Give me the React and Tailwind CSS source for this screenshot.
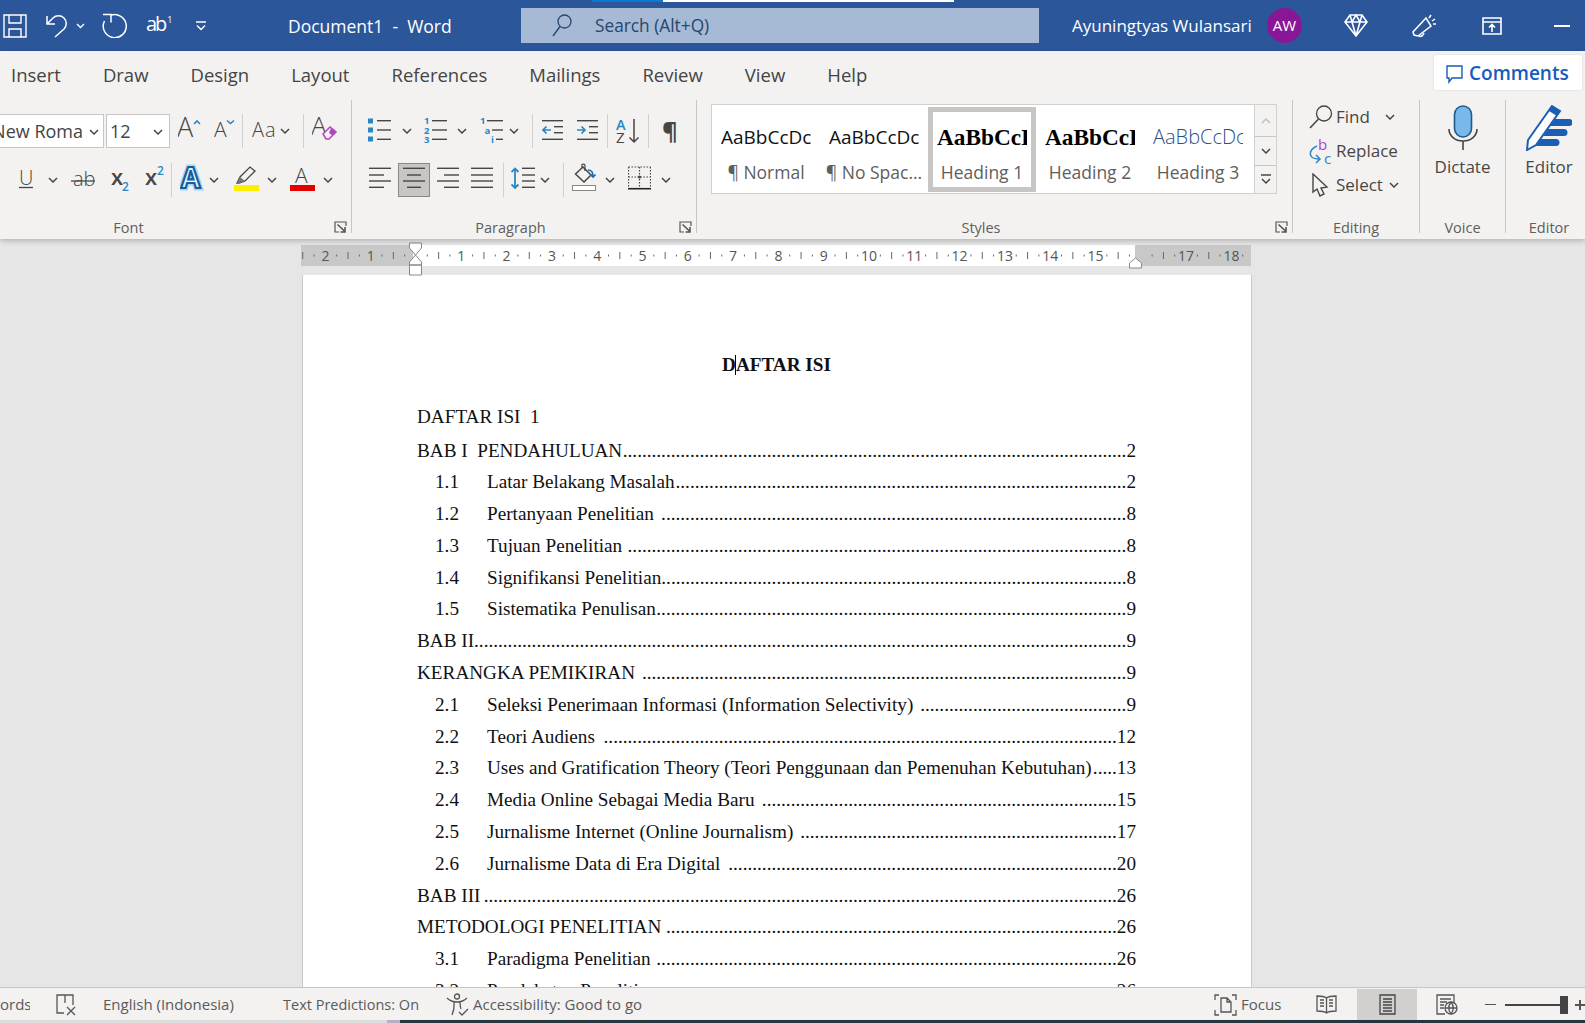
const sans = "font-['Open_Sans',sans-serif]";
const GRAY = '#484644';
const BLUE = '#2a86c4';

function Ic({ w, h = 34, className = '', children }) {
  return (
    <svg width={w} height={h} viewBox={`0 0 ${w} ${h}`} fill="none" stroke={GRAY} strokeWidth="1.3" className={`shrink-0 ${className}`}>
      {children}
    </svg>
  );
}

function T({ x, y, s, w = 400, c = GRAY, children, ...rest }) {
  return (
    <text x={x} y={y} fontSize={s} fontWeight={w} fill={c} stroke="none" fontFamily="'Open Sans',sans-serif" {...rest}>
      {children}
    </text>
  );
}

function Chev({ className = '' }) {
  return (
    <svg width="10" height="6" viewBox="0 0 10 6" fill="none" stroke={GRAY} strokeWidth="1.5" className={`shrink-0 ${className}`}>
      <path d="M1 1l4 4 4-4" />
    </svg>
  );
}

function Sep({ className = '' }) {
  return <div className={`h-[34px] w-px shrink-0 bg-[#d2d0ce] ${className}`} />;
}

function Launcher() {
  return (
    <svg width="13" height="12" viewBox="0 0 13 12" fill="none" stroke="#555" strokeWidth="1.2" className="absolute bottom-0 right-[4px]">
      <path d="M12 5V1H1v10h4" />
      <path d="M3.5 3.5L11 10.5M11 6v5H6.5" strokeWidth="1.6" />
    </svg>
  );
}

function Group({ width, label, labelPad = '', launcher, children }) {
  return (
    <div className={`relative flex h-[133px] shrink-0 flex-col border-r border-[#c8c6c4] ${width}`}>
      <div className="flex-1">{children}</div>
      <div className={`h-[10px] text-center text-[14.5px] leading-[10px] text-[#605e5c] ${labelPad}`}>{label}</div>
      {launcher && <Launcher />}
    </div>
  );
}

function Lines({ rows, x = 0, color = GRAY }) {
  return rows.map(([a, b, y]) => <path key={y + '' + a} d={`M${a + x} ${y}H${b + x}`} stroke={color} strokeWidth="1.4" />);
}

function TitleBar() {
  return (
    <div className="relative flex h-[51px] shrink-0 items-center bg-[#2b579a] text-white">
      <div className="absolute left-[592px] top-0 h-[2px] w-[71px] bg-[#0a7ad1]" />
      <div className="absolute left-[663px] top-0 h-[2px] w-[291px] bg-white" />
      <svg width="24" height="24" viewBox="0 0 24 24" fill="none" stroke="#fff" strokeWidth="1.4" className="ml-[3px] shrink-0">
        <path d="M1 1h22v22H1zM6 1v8h12V1M6 23v-8h12v8" />
      </svg>
      <svg width="23" height="25" viewBox="0 0 23 25" fill="none" stroke="#fff" strokeWidth="1.5" className="ml-[19px] shrink-0">
        <path d="M1 3v8h8M1 11l6-6c3-3 8-3 11 0s3 8 0 11l-9 8" />
      </svg>
      <svg width="9" height="6" viewBox="0 0 9 6" fill="none" stroke="#fff" strokeWidth="1.4" className="ml-[7px] shrink-0">
        <path d="M1 1l3.5 3.5L8 1" />
      </svg>
      <svg width="25" height="25" viewBox="0 0 25 25" fill="none" stroke="#fff" strokeWidth="1.5" className="ml-[17px] shrink-0">
        <path d="M8.5 2.5A11.5 11.5 0 1 1 2.5 8M1 1.500h8v8" />
      </svg>
      <span className="ml-[19px] w-[28px] shrink-0 whitespace-nowrap text-[20px] leading-[24px] tracking-[-2px]">
        ab<span className="relative top-[-8px] ml-[2px] text-[9px]">1</span>
      </span>
      <svg width="12" height="10" viewBox="0 0 12 10" fill="none" stroke="#fff" strokeWidth="1.4" className="ml-[21px] shrink-0">
        <path d="M1 1h10M2 4.5l4 4 4-4" />
      </svg>
      <span className="ml-[81px] w-[233px] shrink-0 whitespace-pre pt-[2px] text-[17.5px]">Document1  -  Word</span>
      <div className="flex h-[35px] w-[518px] shrink-0 items-center bg-[#a6b9d5] text-[#26466f]">
        <svg width="20" height="23" viewBox="0 0 20 23" fill="none" stroke="#26466f" strokeWidth="1.3" className="ml-[31px] shrink-0">
          <circle cx="12.5" cy="7.5" r="6.5" />
          <path d="M8 12.5L1 22" />
        </svg>
        <span className="ml-[23px] text-[17.3px]">Search (Alt+Q)</span>
      </div>
      <span className="ml-[33px] w-[195px] shrink-0 whitespace-nowrap text-[17px]">Ayuningtyas Wulansari</span>
      <div className="flex h-[35px] w-[35px] shrink-0 items-center justify-center rounded-full bg-[#881798] text-[15px]">AW</div>
      <svg width="24" height="23" viewBox="0 0 24 23" fill="none" stroke="#fff" strokeWidth="1.6" className="ml-[42px] shrink-0">
        <path d="M6 1h12l5 7-11 14L1 8zM1 8h22M8 8l4 14 4-14M6 1l2 7 4-7 4 7 2-7" />
      </svg>
      <svg width="25" height="25" viewBox="0 0 25 25" fill="none" stroke="#fff" strokeWidth="1.5" className="ml-[44px] shrink-0">
        <path d="M14 5l5 8L6 23l-4-1-1-3zM7 23c2 1 4 0 5-3M17 5l2-3M20 8l3-2M21 11h3" />
      </svg>
      <svg width="20" height="18" viewBox="0 0 20 18" fill="none" stroke="#fff" strokeWidth="1.6" className="ml-[45px] shrink-0">
        <path d="M1 1h18v16H1zM1 5h18M10 15V8M7 10.5L10 7.5l3 3" />
      </svg>
      <div className="ml-[52px] h-[2px] w-[16px] shrink-0 bg-white" />
    </div>
  );
}

function TabBar() {
  const tabs = ['Insert', 'Draw', 'Design', 'Layout', 'References', 'Mailings', 'Review', 'View', 'Help'];
  return (
    <div className="flex h-[49px] items-center justify-between pb-[2px] pl-[11px] pr-[3px] text-[18.5px] text-[#444]">
      <div className="flex gap-[42px]">
        {tabs.map((t) => (
          <span key={t}>{t}</span>
        ))}
      </div>
      <div className="mb-[5px] flex h-[35px] w-[148px] items-center rounded-[2px] bg-white pl-[12px] pt-[3px] shadow-[0_0_2px_#d0d0d0]">
        <svg width="17" height="20" viewBox="0 0 17 20" fill="none" stroke="#185abd" strokeWidth="1.4" className="shrink-0">
          <path d="M1 2h15v12H6l-3 4v-4H1z" />
        </svg>
        <span className="ml-[6px] text-[19px] font-semibold text-[#185abd]">Comments</span>
      </div>
    </div>
  );
}

function FontGroup() {
  return (
    <Group width="w-[352px]" label="Font" labelPad="pr-[94px]" launcher>
      <div className="mt-[14px] flex h-[34px] items-center">
        <div className="flex h-[34px] w-[104px] shrink-0 items-center justify-end overflow-hidden whitespace-nowrap border border-l-0 border-[#c8c6c4] bg-white pr-[4px] pt-[1px] text-[18px] text-[#444]">
          <span>New Roma</span>
          <Chev className="ml-[6px]" />
        </div>
        <div className="ml-[2px] flex h-[34px] w-[64px] shrink-0 items-center justify-between border border-[#c8c6c4] bg-white pl-[3px] pr-[6px] pt-[1px] text-[18px] text-[#444]">
          <span>12</span>
          <Chev />
        </div>
        <Ic w={23} className="ml-[8px]">
          <T x="-1" y="23" s="27" w={300}>A</T>
          <path d="M16 10l3-3 3 3" stroke={BLUE} strokeWidth="1.6" />
        </Ic>
        <Ic w={21} className="ml-[13px]">
          <T x="0" y="23" s="21" w={300}>A</T>
          <path d="M13 6.5l3.5 3 3.5-3" stroke={BLUE} strokeWidth="1.6" />
        </Ic>
        <Sep className="ml-[7px]" />
        <Ic w={38} className="ml-[9px]">
          <T x="0" y="23" s="20" w={300} letterSpacing="1">Aa</T>
          <path d="M29 15l4 4 4-4" strokeWidth="1.5" />
        </Ic>
        <Sep className="ml-[13px]" />
        <Ic w={25} className="ml-[8px]">
          <T x="-1" y="21" s="26" w={300}>A</T>
          <path d="M11 20l7-7 6 5-7 7h-3z" stroke="#b146c2" strokeWidth="1.5" fill="#f3f2f1" />
          <path d="M17 19l3.500 2.500 3.500-3.500-5-4z" fill="#b146c2" stroke="none" />
        </Ic>
      </div>
      <div className="mt-[15px] flex h-[34px] items-center">
        <Ic w={14} className="ml-[19px]">
          <T x="0" y="22" s="20" w={300}>U</T>
          <path d="M0 24.5h14" />
        </Ic>
        <Chev className="ml-[15px]" />
        <Ic w={24} className="ml-[13px]">
          <T x="2" y="23" s="20" w={300}>ab</T>
          <path d="M0 18h24" />
        </Ic>
        <Ic w={18} className="ml-[16px]">
          <T x="0" y="22" s="22" w={600}>x</T>
          <T x="11" y="28" s="12" w={600} c={BLUE}>2</T>
        </Ic>
        <Ic w={19} className="ml-[16px]">
          <T x="0" y="22" s="22" w={600}>x</T>
          <T x="12" y="12" s="12" w={600} c={BLUE}>2</T>
        </Ic>
        <Sep className="ml-[7px]" />
        <Ic w={25} className="ml-[8px]">
          <T x="1" y="25" s="28" w={700} c="#a9d6f2" stroke="#a9d6f2" strokeWidth="5">A</T>
          <T x="1" y="25" s="28" w={700} c="#e8f3fb" stroke="#145f9e" strokeWidth="2.2">A</T>
        </Ic>
        <Chev className="ml-[4px]" />
        <Ic w={25} className="ml-[15px]">
          <path d="M3 20l3-6L16 4l5 4-10 10-6 2z" fill="#f3f2f1" />
          <path d="M3 20l3-6 5 4-6 2z" fill="#777" stroke="none" />
          <rect x="0" y="22" width="25" height="6" fill="#ffee00" stroke="none" />
        </Ic>
        <Chev className="ml-[8px]" />
        <Ic w={25} className="ml-[13px]">
          <T x="5" y="20" s="21" w={300}>A</T>
          <rect x="0" y="22" width="25" height="6" fill="#e60000" stroke="none" />
        </Ic>
        <Chev className="ml-[8px]" />
      </div>
    </Group>
  );
}

function ParagraphGroup() {
  return (
    <Group width="w-[345px]" label="Paragraph" labelPad="pr-[27px]" launcher>
      <div className="mt-[14px] flex h-[34px] items-center">
        <Ic w={24} className="ml-[15px]">
          <rect x="1" y="4.5" width="5" height="5" fill={BLUE} stroke="none" />
          <rect x="1" y="13.5" width="5" height="5" fill={BLUE} stroke="none" />
          <rect x="1" y="22.5" width="5" height="5" fill={BLUE} stroke="none" />
          <Lines rows={[[10, 24, 6.7], [10, 24, 16], [10, 24, 25.3]]} />
        </Ic>
        <Chev className="ml-[11px]" />
        <Ic w={23} className="ml-[12px]">
          <T x="0" y="10" s="9.5" w={700} c={BLUE}>1</T>
          <T x="0" y="19.5" s="9.5" w={700} c={BLUE}>2</T>
          <T x="0" y="29" s="9.5" w={700} c={BLUE}>3</T>
          <Lines rows={[[8, 23, 6.7], [8, 23, 16], [8, 23, 25.3]]} />
        </Ic>
        <Chev className="ml-[10px]" />
        <Ic w={23} className="ml-[13px]">
          <T x="0" y="10" s="9.5" w={700} c={BLUE}>1</T>
          <T x="4.5" y="19.5" s="9.5" w={700} c={BLUE}>a</T>
          <T x="11" y="29" s="9.5" w={700} c={BLUE}>i</T>
          <Lines rows={[[7, 23, 6.7], [12, 23, 16], [16, 23, 25.3]]} />
        </Ic>
        <Chev className="ml-[6px]" />
        <Sep className="ml-[13px]" />
        <Ic w={21} className="ml-[9px]">
          <Lines rows={[[0, 21, 6.7], [12, 21, 12.7], [12, 21, 18.7], [0, 21, 25.3]]} />
          <path d="M9 16H1M4.5 12.5L1 16l3.5 3.5" stroke={BLUE} strokeWidth="1.7" />
        </Ic>
        <Ic w={21} className="ml-[14px]">
          <Lines rows={[[0, 21, 6.7], [12, 21, 12.7], [12, 21, 18.7], [0, 21, 25.3]]} />
          <path d="M0 16h8M4.5 12.5L8 16l-3.5 3.5" stroke={BLUE} strokeWidth="1.7" />
        </Ic>
        <Sep className="ml-[9px]" />
        <Ic w={24} className="ml-[8px]">
          <T x="0" y="15.5" s="14.5" w={600} c={BLUE}>A</T>
          <T x="0" y="29" s="15" w={500}>Z</T>
          <path d="M18 5v23M13.5 23.5L18 28l4.5-4.5" strokeWidth="1.5" />
        </Ic>
        <Sep className="ml-[8px]" />
        <Ic w={15} className="ml-[13px]">
          <T x="0" y="26" s="24" w={700}>¶</T>
        </Ic>
      </div>
      <div className="mt-[15px] flex h-[34px] items-center">
        <Ic w={22} className="ml-[17px]">
          <Lines rows={[[0, 22, 5.3], [0, 15, 12], [0, 22, 18], [0, 15, 24.3]]} />
        </Ic>
        <div className="ml-[7px] h-[34px] w-[32px] shrink-0 border border-[#8a8886] bg-[#c8c6c4]">
          <Ic w={30} h={32}>
            <Lines rows={[[4, 26, 4.3], [8, 22, 11], [4, 26, 17], [8, 22, 23.3]]} />
          </Ic>
        </div>
        <Ic w={22} className="ml-[7px]">
          <Lines rows={[[0, 22, 5.3], [7, 22, 12], [0, 22, 18], [7, 22, 24.3]]} />
        </Ic>
        <Ic w={22} className="ml-[12px]">
          <Lines rows={[[0, 22, 5.3], [0, 22, 12], [0, 22, 18], [0, 22, 24.3]]} />
        </Ic>
        <Sep className="ml-[10px]" />
        <Ic w={24} className="ml-[7px]">
          <Lines rows={[[11, 24, 5.3], [11, 24, 12], [11, 24, 18], [11, 24, 24.3]]} />
          <path d="M4 6v19M.5 9L4 5.5 7.5 9M.5 21.5L4 25l3.5-3.5" stroke={BLUE} strokeWidth="1.8" />
        </Ic>
        <Chev className="ml-[5px]" />
        <Sep className="ml-[13px]" />
        <Ic w={24} className="ml-[8px]">
          <path d="M3.5 11L11 4l8 8-7 7z" strokeWidth="1.5" fill="#f3f2f1" />
          <path d="M10 5V1.5c2-1 3 0 3 1.5v5" strokeWidth="1.2" />
          <path d="M16 7c3 0 5 2 5 6M18.500 11.500L21 14l2.500-2.500" stroke="#1a6eb5" strokeWidth="1.6" />
          <rect x="0.5" y="22.500" width="23" height="5" stroke="#8a8886" fill="#fff" strokeWidth="1" />
        </Ic>
        <Chev className="ml-[9px]" />
        <Ic w={23} className="ml-[13px]">
          <path d="M.5 4h22M.5 4v20M22.500 4v20M11.500 4v20M.5 14h22" strokeDasharray="1.5 1.5" strokeWidth="1.2" />
          <path d="M0 25.700h23" stroke="#222" strokeWidth="1.6" />
          <circle cx="11.500" cy="14" r="1.600" fill={GRAY} stroke="none" />
        </Ic>
        <Chev className="ml-[10px]" />
      </div>
    </Group>
  );
}

function StyleCell({ preview, label, heading, color, selected }) {
  return (
    <div className={`flex h-[85px] w-[108px] shrink-0 flex-col items-center border-[5px] ${selected ? 'border-[#c8c6c4]' : 'border-transparent'}`}>
      <div
        className={`mt-[11px] h-[28px] w-[90px] overflow-hidden whitespace-nowrap leading-[28px] ${
          heading ? "font-['Liberation_Serif',serif] text-[23.3px] font-bold text-black" : color || 'text-[19px] text-[#111]'
        }`}
      >
        {preview}
      </div>
      <div className="mt-[9px] whitespace-nowrap text-[17.5px] leading-[24px] text-[#605e5c]">{label}</div>
    </div>
  );
}

function StylesGroup() {
  return (
    <Group width="w-[596px]" label="Styles" labelPad="pr-[27px]" launcher>
      <div className="ml-[14px] mt-[4px] flex h-[90px] w-[566px] border border-[#d2d0ce] bg-white">
        <div className="flex w-[542px] items-center">
          <StyleCell preview="AaBbCcDc" label="¶ Normal" />
          <StyleCell preview="AaBbCcDc" label="¶ No Spac..." />
          <StyleCell preview="AaBbCcDd" label="Heading 1" heading selected />
          <StyleCell preview="AaBbCcDd" label="Heading 2" heading />
          <StyleCell preview="AaBbCcDc" label="Heading 3" color="text-[20px] font-light text-[#2f4f7f]" />
        </div>
        <div className="flex w-[22px] flex-col border-l border-[#d2d0ce] bg-[#f3f2f1]">
          <div className="flex h-[32px] items-center justify-center border-b border-[#c8c6c4]">
            <svg width="10" height="6" viewBox="0 0 10 6" fill="none" stroke="#c0c0c0" strokeWidth="1.500"><path d="M1 5l4-4 4 4" /></svg>
          </div>
          <div className="flex h-[29px] items-center justify-center border-b border-[#c8c6c4]">
            <Chev />
          </div>
          <div className="flex flex-1 items-center justify-center">
            <svg width="12" height="11" viewBox="0 0 12 11" fill="none" stroke={GRAY} strokeWidth="1.500"><path d="M1 1h10M2 5l4 4 4-4" /></svg>
          </div>
        </div>
      </div>
    </Group>
  );
}

function EditingGroup() {
  const row = 'flex h-[34px] items-center text-[17px] text-[#484644]';
  return (
    <Group width="w-[127px]" label="Editing">
      <div className="ml-[16px] flex flex-col">
        <div className={row}>
          <svg width="24" height="24" viewBox="0 0 24 24" fill="none" stroke={GRAY} strokeWidth="1.300" className="shrink-0">
            <circle cx="15" cy="8.500" r="7.500" />
            <path d="M9.500 14L1 23" strokeWidth="1.600" />
          </svg>
          <span className="ml-[3px]">Find</span>
          <Chev className="ml-[15px]" />
        </div>
        <div className={row}>
          <svg width="24" height="28" viewBox="0 0 24 28" fill="none" stroke={BLUE} strokeWidth="1.500" className="shrink-0">
            <text x="9" y="13" fontSize="15" fill="#b146c2" stroke="none" fontFamily="'Open Sans',sans-serif">b</text>
            <text x="15" y="27" fontSize="15" fill={BLUE} stroke="none" fontFamily="'Open Sans',sans-serif">c</text>
            <path d="M8 9C3 11 0 15 2 19c1 2 4 3 9 3M7 18l4 4-4 4" />
          </svg>
          <span className="ml-[3px]">Replace</span>
        </div>
        <div className={row}>
          <svg width="24" height="24" viewBox="0 0 24 24" fill="none" stroke={GRAY} strokeWidth="1.400" className="shrink-0">
            <path d="M4 1v18l4-3 3 7 4-2-3-6 6-1z" />
          </svg>
          <span className="ml-[3px]">Select</span>
          <Chev className="ml-[6px]" />
        </div>
      </div>
    </Group>
  );
}

function Ribbon() {
  return (
    <div className={`relative z-10 h-[188px] shrink-0 bg-[#f3f2f1] shadow-[0_2px_5px_rgba(0,0,0,0.22)] ${sans}`}>
      <TabBar />
      <div className="flex">
        <FontGroup />
        <ParagraphGroup />
        <StylesGroup />
        <EditingGroup />
        <Group width="w-[86px]" label="Voice">
          <div className="flex flex-col items-center pt-[5px]">
            <svg width="30" height="46" viewBox="0 0 30 46" fill="none" stroke="#1d5c91" strokeWidth="1.600" className="shrink-0">
              <rect x="6.500" y="1" width="17" height="31" rx="8.500" fill="#7ab8ea" />
              <path d="M1 24c0 7 6 12 14 12s14-5 14-12M15 36v9" stroke="#444" />
            </svg>
            <span className="mt-[4px] text-[17px] leading-[24px] text-[#484644]">Dictate</span>
          </div>
        </Group>
        <div className="w-[80px] shrink-0 pl-[6px]">
          <div className="flex h-[133px] flex-col">
            <div className="flex flex-1 flex-col items-center pt-[5px]">
              <svg width="46" height="46" viewBox="0 0 46 46" fill="none" className="shrink-0">
                <path d="M26 1l8 5L10 40 1 45l1-10z" fill="#fff" stroke="#1a5fb4" strokeWidth="2" />
                <path d="M26 1l8 5-3 5-8-5z" fill="#1a5fb4" />
                <path d="M28 14h15a3 3 0 0 1 0 7H24zM22 24h16a3 3 0 0 1 0 7H17zM15 34h15a3 3 0 0 1 0 7H10z" fill="#1a5fb4" />
              </svg>
              <span className="mt-[4px] text-[17px] leading-[24px] text-[#484644]">Editor</span>
            </div>
            <div className="h-[10px] text-center text-[14.5px] leading-[10px] text-[#605e5c]">Editor</div>
          </div>
        </div>
      </div>
    </div>
  );
}

function Ruler() {
  const zero = 115;
  const step = 45.3;
  const marks = [];
  for (let i = -2.75; i <= 18.75; i += 0.25) {
    const x = zero + i * step;
    if (Number.isInteger(i)) continue;
    const half = Number.isInteger(i * 2);
    marks.push(<path key={i} d={`M${x} ${half ? 7 : 9.500}V${half ? 14 : 11.500}`} stroke="#666" strokeWidth="1" />);
  }
  const nums = [2, 1, 1, 2, 3, 4, 5, 6, 7, 8, 9, 10, 11, 12, 13, 14, 15, 17, 18];
  const pos = [-2, -1, 1, 2, 3, 4, 5, 6, 7, 8, 9, 10, 11, 12, 13, 14, 15, 17, 18];
  return (
    <div className="relative ml-[301px] mt-[6px] flex h-[21px] w-[950px] shrink-0 bg-white">
      <div className="h-full w-[112px] bg-[#c8c8c8]" />
      <div className="ml-auto h-full w-[116px] bg-[#c8c8c8]" />
      <svg width="950" height="21" viewBox="0 0 950 21" className="absolute left-0 top-0">
        {marks}
        {pos.map((p, i) => (
          <text key={p} x={zero + p * step} y="16" fontSize="14" textAnchor="middle" fill="#555" fontFamily="'Open Sans',sans-serif">
            {nums[i]}
          </text>
        ))}
      </svg>
      <svg width="15" height="35" viewBox="0 0 15 35" fill="#fff" stroke="#8a8886" strokeWidth="1" className="absolute left-[107px] top-[-3.500px]">
        <path d="M1.500 1h12v5l-6 7-6-7zM7.500 13l6 7v3h-12v-3zM1.500 23h12v10h-12z" />
      </svg>
      <svg width="15" height="12" viewBox="0 0 15 12" fill="#fff" stroke="#8a8886" strokeWidth="1" className="absolute left-[827px] top-[12px]">
        <path d="M1.500 6l6-5 6 5v5h-12z" />
      </svg>
    </div>
  );
}

// title, dot count, page (sub rows have the number in front)
const toc = [
  { title: 'BAB I  PENDAHULUAN', dots: 105, page: '2' },
  { no: '1.1', title: 'Latar Belakang Masalah', dots: 94, page: '2' },
  { no: '1.2', title: 'Pertanyaan Penelitian ', dots: 97, page: '8' },
  { no: '1.3', title: 'Tujuan Penelitian', dots: 104, page: '8' },
  { no: '1.4', title: 'Signifikansi Penelitian', dots: 97, page: '8' },
  { no: '1.5', title: 'Sistematika Penulisan', dots: 98, page: '9' },
  { title: 'BAB II', dots: 136, page: '9' },
  { title: 'KERANGKA PEMIKIRAN ', dots: 101, page: '9' },
  { no: '2.1', title: 'Seleksi Penerimaan Informasi (Information Selectivity) ', dots: 43, page: '9' },
  { no: '2.2', title: 'Teori Audiens ', dots: 107, page: '12' },
  { no: '2.3', title: 'Uses and Gratification Theory (Teori Penggunaan dan Pemenuhan Kebutuhan)', dots: 5, page: '13' },
  { no: '2.4', title: 'Media Online Sebagai Media Baru ', dots: 74, page: '15' },
  { no: '2.5', title: 'Jurnalisme Internet (Online Journalism) ', dots: 66, page: '17' },
  { no: '2.6', title: 'Jurnalisme Data di Era Digital ', dots: 81, page: '20' },
  { title: 'BAB III', dots: 132, page: '26' },
  { title: 'METODOLOGI PENELITIAN', dots: 94, page: '26' },
  { no: '3.1', title: 'Paradigma Penelitian ', dots: 96, page: '26' },
  { no: '3.2', title: 'Pendekatan Penelitian ', dots: 94, page: '26' },
];

function TocRow({ item }) {
  return (
    <div className={`flex h-[31.8px] items-center whitespace-pre ${item.no ? 'pl-[18px]' : ''}`}>
      {item.no && <span className="w-[52px] shrink-0">{item.no}</span>}
      <span className="shrink-0">{item.title}</span>
      <span className="ml-auto shrink-0">{'.'.repeat(item.dots)}</span>
      <span className="shrink-0">{item.page}</span>
    </div>
  );
}

function Page() {
  return (
    <div className="ml-[302px] mt-[9px] h-[760px] w-[950px] shrink-0 border-x border-[#c8c8c8] bg-white pl-[114px] pr-[115px] pt-[75px] font-['Liberation_Serif',serif] text-[19.2px] text-[#111]">
      <div className="h-[30px] text-center font-bold leading-[30px]">
        D<span className="mx-[-0.5px] inline-block h-[20px] w-px bg-black align-[-4px]" />AFTAR ISI
      </div>
      <div className="mb-[2px] mt-[21px] flex h-[32px] items-center whitespace-pre">DAFTAR ISI  1</div>
      {toc.map((item) => (
        <TocRow key={item.title} item={item} />
      ))}
    </div>
  );
}

function StatusBar() {
  return (
    <div className={`relative z-10 flex h-[33px] shrink-0 items-center overflow-hidden whitespace-nowrap border-t border-[#c8c6c4] bg-[#f3f2f1] pt-[1px] text-[15px] text-[#5a5a5a] ${sans}`}>
      <span className="w-[30px] shrink-0 overflow-hidden text-right">ords</span>
      <svg width="22" height="22" viewBox="0 0 22 22" fill="none" stroke="#555" strokeWidth="1.300" className="ml-[26px] shrink-0">
        <path d="M8 19H1V1h8v5M9 1h8v10M9 1v8M11 13l8 8M19 13l-8 8" />
      </svg>
      <span className="ml-[25px] w-[180px] shrink-0">English (Indonesia)</span>
      <span className="w-[163px] shrink-0 text-[14.5px]">Text Predictions: On</span>
      <svg width="24" height="24" viewBox="0 0 24 24" fill="none" stroke="#555" strokeWidth="1.300" className="shrink-0">
        <circle cx="11" cy="3.500" r="2.500" />
        <path d="M1 5c3 3 5 4 10 4s7-1 10-4M8 9c0 4 1 6-2 13M14 9c0 3 0 4 1 7M13 19l3 3 6-6" />
      </svg>
      <span className="ml-[3px] w-[741px] shrink-0">Accessibility: Good to go</span>
      <svg width="23" height="22" viewBox="0 0 23 22" fill="none" stroke="#555" strokeWidth="1.300" className="shrink-0">
        <path d="M1 6V1h4M18 1h4v5M22 16v5h-4M5 21H1v-5M7 18V4h6l4 4v10zM13 4v4h4" />
      </svg>
      <span className="ml-[4px] w-[75px] shrink-0">Focus</span>
      <svg width="21" height="19" viewBox="0 0 21 19" fill="none" stroke="#555" strokeWidth="1.300" className="shrink-0">
        <path d="M10.500 3C8 1 4 1 1 1v15c3 0 7 0 9.500 2 2.500-2 6.500-2 9.500-2V1c-3 0-7 0-9.500 2zM10.500 3v15M4 5h4M4 8h4M4 11h4M13 5h4M13 8h4M13 11h4" />
      </svg>
      <div className="ml-[20px] flex h-full w-[60px] shrink-0 items-center justify-center bg-[#d2d0ce]">
        <svg width="17" height="21" viewBox="0 0 17 21" fill="none" stroke="#444" strokeWidth="1.300">
          <path d="M1 1h15v19H1zM4 5h9M4 8h9M4 11h9M4 14h9M4 17h9" />
        </svg>
      </div>
      <svg width="22" height="21" viewBox="0 0 22 21" fill="none" stroke="#555" strokeWidth="1.300" className="ml-[19px] shrink-0">
        <path d="M9 20H1V1h17v8M4 5h11M4 8h7M4 11h4M4 14h4" />
        <circle cx="15" cy="14" r="6" />
        <path d="M9 14h12M15 8c-3 4-3 8 0 12M15 8c3 4 3 8 0 12" />
      </svg>
      <div className="ml-[27px] h-px w-[11px] shrink-0 bg-[#555]" />
      <div className="relative ml-[9px] h-[2px] w-[60px] shrink-0 bg-[#444]">
        <div className="absolute left-[55px] top-[-8px] h-[18px] w-[8px] bg-[#444]" />
      </div>
      <div className="relative ml-[10px] h-[2px] w-[10px] shrink-0 bg-[#555]">
        <div className="absolute left-[4px] top-[-4px] h-[10px] w-[2px] bg-[#555]" />
      </div>
    </div>
  );
}

export default function App() {
  return (
    <div className={`flex h-screen w-full flex-col overflow-hidden bg-[#e6e6e6] ${sans}`}>
      <TitleBar />
      <Ribbon />
      <div className="flex min-h-0 flex-1 flex-col overflow-hidden">
        <Ruler />
        <Page />
      </div>
      <StatusBar />
      <div className="flex h-[3px] shrink-0">
        <div className="w-[387px] bg-[#dcdcdc]" />
        <div className="w-[13px] bg-[#b9aec2]" />
        <div className="flex-1 bg-[#27353d]" />
      </div>
    </div>
  );
}
